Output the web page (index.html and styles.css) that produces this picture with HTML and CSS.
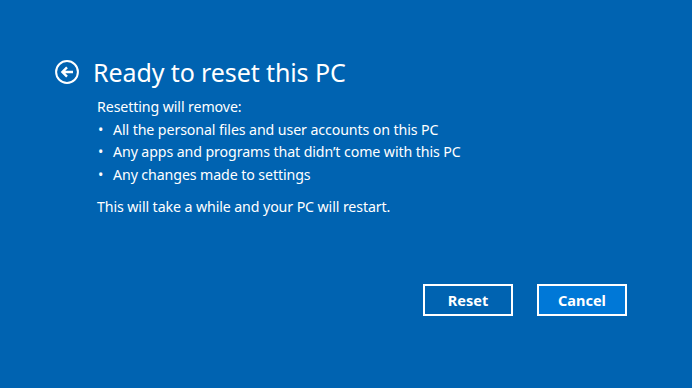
FILE: index.html
```html
<!doctype html>
<html lang="en">
<head>
<meta charset="UTF-8">
<title>Ready to reset this PC</title>
<link rel="stylesheet" href="styles.css">
</head>
<body>
<div class="page">
	<div class="title">
		<span class="back">
			<svg width="24" height="24" viewBox="0 0 24 24">
				<circle cx="12" cy="12" r="10.9" fill="none" stroke="#fff" stroke-width="2"/>
				<path d="M18 12H7.5M12 7.4L7.4 12l4.6 4.6" fill="none" stroke="#fff" stroke-width="2.4"/>
			</svg>
		</span>
		<h1>Ready to reset this PC</h1>
	</div>
	<div class="content">
		<p>Resetting will remove:</p>
		<ul>
			<li>All the personal files and user accounts on this PC</li>
			<li>Any apps and programs that didn’t come with this PC</li>
			<li>Any changes made to settings</li>
		</ul>
		<p class="note">This will take a while and your PC will restart.</p>
	</div>
	<div class="btns">
		<button class="btn">Reset</button>
		<button class="btn btn-main">Cancel</button>
	</div>
</div>
</body>
</html>
```

FILE: styles.css
```css
*{margin:0;padding:0;}
html,body{height:100%;}
body{
	background-color:#0063b1;
	color:#fff;
	font-family:"Noto Sans","Open Sans",sans-serif;
}
.page{
	padding:55px 0 0 55px;
}
.title{
	display:flex;
	align-items:center;
	gap:14px;
	height:34px;
}
.back{
	display:flex;
}
.title h1{
	font-weight:normal;
	font-size:25px;
	letter-spacing:-0.1px;
}
.content{
	padding:7px 0 0 42px;
	font-size:14.2px;
	line-height:22.6px;
	letter-spacing:-0.1px;
}
.content ul{
	list-style:none;
}
.content li{
	position:relative;
	padding-left:16px;
}
.content li::before{
	content:'•';
	position:absolute;
	left:1px;
}
.content .note{
	margin-top:10px;
}
.btns{
	display:flex;
	justify-content:flex-end;
	gap:24px;
	padding:65px 65px 0 0;
}
.btn{
	width:90px;
	height:32px;
	border:2px solid #fff;
	background-color:transparent;
	color:#fff;
	font-family:"Noto Sans","Open Sans",sans-serif;
	font-weight:bold;
	font-size:14.5px;
}
.btn-main{
	background-color:#0078d7;
}
```
